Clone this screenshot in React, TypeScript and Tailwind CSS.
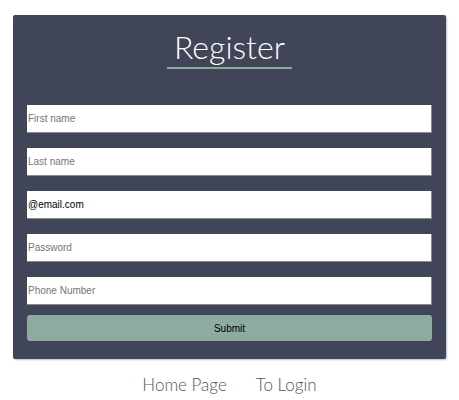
import React from "react";

const fields = [
  { ph: "First name", val: "" },
  { ph: "Last name", val: "" },
  { ph: "", val: "@email.com" },
  { ph: "Password", val: "" },
  { ph: "Phone Number", val: "" },
];

export default function App() {
  return (
    <div className="w-[459px] h-[400px] bg-white">
      <div className="mx-[13px] pt-[15px]">
        <div className="bg-[#414558] rounded-[2px] shadow-[1px_1px_2px_rgba(0,0,0,0.25)] px-[14px] pt-[14px] pb-[18px]">
          <div className="flex justify-center">
            <h1
              className="text-[32px] leading-[36px] text-white font-light px-[7px] pb-[2px] border-b-2 border-[#8aaa9c]"
              style={{ fontFamily: '"Lato", "Open Sans", sans-serif' }}
            >
              Register
            </h1>
          </div>
          <div className="mt-[36px] flex flex-col gap-[15px]">
            {fields.map((f, i) => (
              <input
                key={i}
                readOnly
                placeholder={f.ph}
                defaultValue={f.val}
                className="h-[28px] w-full bg-white border-r border-b border-[#8a8a8a] pl-[1px] text-[10px] text-black placeholder:text-[#757575] outline-none"
                style={{ fontFamily: '"Liberation Sans", Arial, sans-serif' }}
              />
            ))}
          </div>
          <button
            className="mt-[10px] h-[26px] w-full rounded-[3px] bg-[#8eab9f] text-[10px] text-black"
            style={{ fontFamily: '"Liberation Sans", Arial, sans-serif' }}
          >
            Submit
          </button>
        </div>
      </div>
      <div
        className="mt-[14px] flex justify-center gap-[29px] text-[17px] leading-[24px] text-[#555] font-light"
        style={{ fontFamily: '"Lato", "Open Sans", sans-serif' }}
      >
        <span>Home Page</span>
        <span>To Login</span>
      </div>
    </div>
  );
}
